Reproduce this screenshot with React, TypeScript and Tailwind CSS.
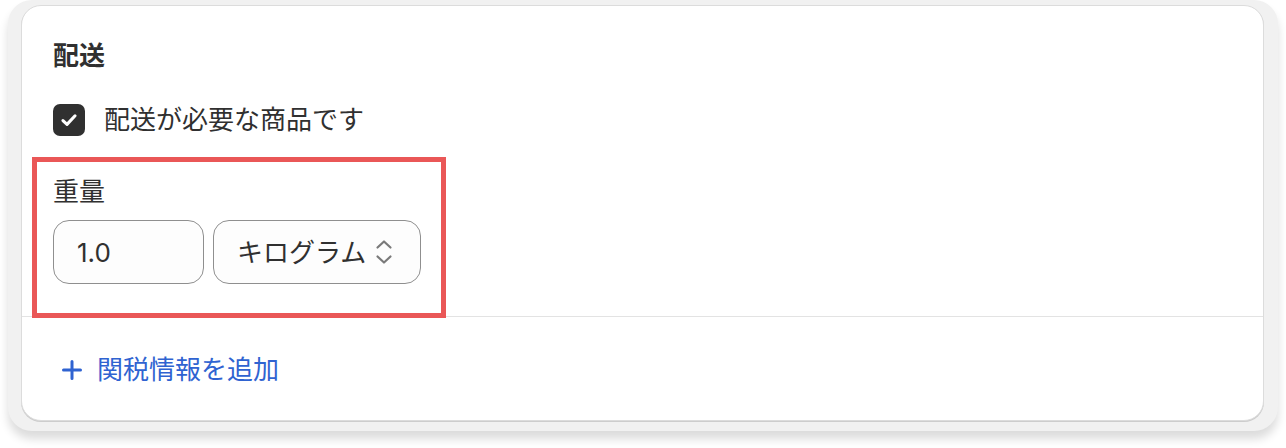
import React from "react";

export default function App() {
  const font = { fontFamily: '"Inter", "Noto Sans CJK JP", "Noto Sans", sans-serif' };
  return (
    <div className="w-[1286px] h-[448px] bg-white overflow-hidden" style={font}>
      <div className="ml-[8px] w-[1270px] h-[431px] bg-[#f1f1f1] rounded-[24px] shadow-[0_8px_10px_rgba(0,0,0,0.14)] pt-[5px] pl-[13px] pr-[14px]">
        <div className="relative h-[416px] bg-white rounded-[20px] border border-[#dcdcdc] shadow-[0_1px_0_#cdcdcd] flex flex-col text-[#303030]">
          <div className="pt-[32px] pl-[31px] pr-[31px]">
            <h2 className="text-[26px] leading-[36px] font-bold">配送</h2>
            <div className="mt-[30px] flex items-center gap-[19px]">
              <div className="w-[32px] h-[32px] rounded-[7px] bg-[#303030] flex items-center justify-center">
                <svg width="22" height="22" viewBox="0 0 20 20" fill="none">
                  <path d="M4.5 10.5 L8.2 14 L15.5 6.2" stroke="white" strokeWidth="2.8" strokeLinecap="round" strokeLinejoin="round" />
                </svg>
              </div>
              <span className="text-[26px] leading-[32px]">配送が必要な商品です</span>
            </div>
            <div className="mt-[38px] text-[26px] leading-[36px]">重量</div>
            <div className="mt-[10px] flex gap-[9px]">
              <div className="w-[151px] h-[64px] rounded-[16px] border border-[#8f8f8f] bg-[#fdfdfd] flex items-center pl-[23px] text-[26px]">
                1.0
              </div>
              <div className="w-[208px] h-[64px] rounded-[16px] border border-[#8f8f8f] bg-[#fdfdfd] flex items-center pl-[23px] text-[26px]">
                <span>キログラム</span>
                <svg className="ml-[9px]" width="18" height="26" viewBox="0 0 18 26" fill="none">
                  <path d="M2.5 8.5 L9 2.5 L15.5 8.5" stroke="#7a7a7a" strokeWidth="2.2" strokeLinecap="round" strokeLinejoin="round" />
                  <path d="M2.5 17.5 L9 23.5 L15.5 17.5" stroke="#7a7a7a" strokeWidth="2.2" strokeLinecap="round" strokeLinejoin="round" />
                </svg>
              </div>
            </div>
          </div>
          <div className="mt-[32px] h-px bg-[#e3e3e3]" />
          <div className="flex-1 flex items-center pl-[40px] pt-[2px] text-[#2f63d1]">
            <svg width="20" height="20" viewBox="0 0 20 20" fill="none">
              <path d="M10 1.5 V18.5 M1.5 10 H18.5" stroke="#2f63d1" strokeWidth="3" strokeLinecap="round" />
            </svg>
            <span className="ml-[15px] text-[26px] leading-[36px]">関税情報を追加</span>
          </div>
          <div className="absolute left-[10px] top-[151px] w-[414px] h-[161px] border-[5px] border-[#ea5757]" />
        </div>
      </div>
    </div>
  );
}
